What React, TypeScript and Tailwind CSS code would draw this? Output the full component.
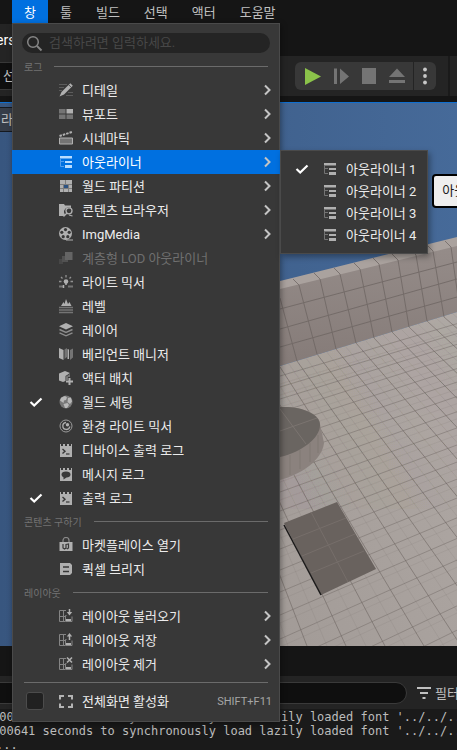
import React from "react";

const L = "#b0b0b0";
const D = "#747474";

type IconProps = { children: React.ReactNode };

function Svg({ children }: IconProps) {
  return (
    <svg viewBox="0 0 16 16" className="size-4 shrink-0" fill="none" aria-hidden="true">
      {children}
    </svg>
  );
}

const treeIcon = (main: string, dim: string) => (
  <Svg>
    <path d="M2 2h12v2.500H2zM7 7h7v2H7zM7 11h7v3H7z" fill={main} />
    <path d="M2.500 4.500v8H6M2.500 7.500H6" stroke={dim} />
  </Svg>
);

const consoleIcon = (
  <Svg>
    <path d="M2 2h1v2h2V2h2v2h2V2h2v2h2V2h1v13H2z" fill={L} />
    <path d="M4.500 7 7 9.200 4.500 11.500" stroke="#383838" strokeWidth="1.400" />
    <path d="M8 12h3.500" stroke="#383838" strokeWidth="1.200" />
  </Svg>
);

const layoutBase = (
  <>
    <path d="M8 2.500H1.500v11H7M1.500 8.500H8M5.500 2.500v11M8.500 7.500h-1v6h6.500v-5" stroke="#858585" />
    <path d="M8 11h5v2H8z" fill={L} />
  </>
);

const icons = {
  details: (
    <Svg>
      <path d="M1 2.500h8M1 5.500h5M1 8.500h3M10 10.500h5M8 13.500h7" stroke="#5c5c5c" />
      <path d="M12.300 1.200 14.800 3.700 6 12.500 1.500 14.500 3.500 10z" fill={L} />
      <path d="m10.700 2.800 2.500 2.500" stroke="#383838" strokeWidth=".8" />
    </Svg>
  ),
  viewport: (
    <Svg>
      <path d="M1 3h6.500v4.500H1zM1 8.500h6.500V13H1zM8.500 8.500H15V13H8.500z" fill={D} />
      <path d="M8.500 3H15v4.500H8.500z" fill={L} />
    </Svg>
  ),
  cinematic: (
    <Svg>
      <path d="M1.500 8h13v6h-13z" fill={D} stroke={L} />
      <path d="M1.500 6 14 2" stroke={L} strokeWidth="2" strokeDasharray="2.500 1" />
    </Svg>
  ),
  outlinerActive: treeIcon("#b8dcff", "#4f9df0"),
  outliner: treeIcon(L, D),
  partition: (
    <Svg>
      <path d="M2 2h12v12H2z" fill="#7d7d7d" />
      <path d="M2 2h5v4H2zM8 2h6v4H8zM2 7h3v3H2zM11 7h3v3h-3zM2 11h3v3H2zM6 11h4v3H6zM11 11h3v3h-3z" fill={L} />
      <path d="M6 7h4v3H6z" fill="#2c5282" />
    </Svg>
  ),
  content: (
    <Svg>
      <path d="M1 2h5l1 1.500h6V6a4.500 4.500 0 0 0-6 6.500L6 14H1z" fill={L} />
      <circle cx="11" cy="8.800" r="3" stroke={L} strokeWidth="1.300" />
      <path d="m9 11-3.500 3.500M11 13l3.500 1" stroke={L} strokeWidth="1.300" />
    </Svg>
  ),
  reel: (
    <Svg>
      <circle cx="7.500" cy="7.500" r="6.500" fill={L} />
      <g fill="#383838">
        <circle cx="7.500" cy="3.600" r="1.600" />
        <circle cx="11.200" cy="6.300" r="1.600" />
        <circle cx="9.800" cy="10.700" r="1.600" />
        <circle cx="5.200" cy="10.700" r="1.600" />
        <circle cx="3.800" cy="6.300" r="1.600" />
      </g>
      <path d="M8 14h7" stroke={L} />
    </Svg>
  ),
  lod: (
    <Svg>
      <path d="M1 9h4v5H1z" fill="#474747" />
      <path d="M4 6h6v6H4z" fill="#525252" />
      <path d="M7 2h7.500v8H7z" fill="#646464" />
    </Svg>
  ),
  light: (
    <Svg>
      <circle cx="8" cy="7.500" r="2.300" fill={L} />
      <path d="M8 1v2.500M3 3l1.500 1.500M13 3l-1.500 1.500M1 7.500h2.500M12.500 7.500H15" stroke="#929292" strokeWidth="1.300" />
      <path d="M1 12.500h5M10 12.500h5" stroke={D} strokeWidth="2" />
      <path d="M5.500 11v3M8 9v2" stroke={L} strokeWidth="1.500" />
    </Svg>
  ),
  level: (
    <Svg>
      <path d="M3 8 5.500 4 6.500 6 8 1l2 5 1.500-2L13.500 8z" fill={L} />
      <path d="M1 9.500h14M1 12h14M1 14.500h14" stroke={D} strokeWidth="1.300" />
    </Svg>
  ),
  layers: (
    <Svg>
      <path d="M8 1 15 4.200 8 7.500 1 4.200z" fill={L} />
      <path d="m1.500 7.500 6.500 3 6.500-3M1.500 10.800l6.500 3 6.500-3" stroke="#8c8c8c" strokeWidth="1.400" />
    </Svg>
  ),
  variant: (
    <Svg>
      <path d="M1 2l4.500 2v10L1 12z" fill={L} />
      <path d="M6.500 3.500 9 2v9l-2.500 2z" fill={D} />
      <path d="M9.500 3 11 3.500v9.500H9.500z" fill={L} />
      <path d="m12 4 3-1.500v9L12 14z" fill={D} />
    </Svg>
  ),
  place: (
    <Svg>
      <path d="M1 3.500 7 1l5 2L7.500 6v5L5 12 1 10.500z" fill={L} />
      <path d="M8 6.500 12 4v3h-2v3H8z" fill={D} />
      <path d="M11.500 8v7M8 11.500h7" stroke={L} strokeWidth="2" />
    </Svg>
  ),
  world: (
    <Svg>
      <circle cx="8" cy="8" r="6.500" fill="#777" />
      <path d="M3 3.800 7 2l2 1.500L8 6 6 6.500 5.500 9 2 6.500zM10 4l3-.5 1 4-2 2.500-2.500-2zM5.500 10l4-1 1.500 2-2 3H7z" fill="#b8b8b8" />
    </Svg>
  ),
  environment: (
    <Svg>
      <circle cx="8" cy="8" r="6" stroke="#9a9a9a" />
      <path d="M8 4.500a3.500 3.500 0 1 0 3.800 4" stroke={L} strokeWidth="1.300" />
      <circle cx="9.500" cy="6.700" r="1.700" fill={L} />
    </Svg>
  ),
  console: consoleIcon,
  message: (
    <Svg>
      <path d="M2 2h1v2h2V2h2v2h2V2h2v2h2V2h1v13H2z" fill={L} />
      <path d="M8 5.500c2.800 0 4.500 1.300 4.500 3s-1.700 3-4 3l-3 2v-2.300c-1.300-.6-2-1.500-2-2.700 0-1.700 1.700-3 4.500-3z" fill="#383838" />
    </Svg>
  ),
  market: (
    <Svg>
      <path d="M5 5V3.500a3 3 0 0 1 6 0V5" stroke="#8a8a8a" strokeWidth="1.200" />
      <path d="M1.500 5h13v9h-13z" fill={L} />
      <path d="M5 7v4l1.500 1 1.500-1M8 7v5M8 7.500 10.500 7v4l-1.500 1" stroke="#383838" strokeWidth="1.200" />
    </Svg>
  ),
  bridge: (
    <Svg>
      <path d="M2 2h10l2 2v8l-2 2H2z" fill={L} />
      <path d="M5 6h6M5 10.500h6" stroke="#383838" strokeWidth="1.500" />
    </Svg>
  ),
  layoutLoad: (
    <Svg>
      {layoutBase}
      <path d="M11.500 1v4" stroke={L} strokeWidth="1.500" />
      <path d="M8.800 4h5.400l-2.700 3.500z" fill={L} />
    </Svg>
  ),
  layoutSave: (
    <Svg>
      {layoutBase}
      <path d="M11.500 4v4" stroke={L} strokeWidth="1.500" />
      <path d="M8.800 4.500h5.400L11.500 1z" fill={L} />
    </Svg>
  ),
  layoutRemove: (
    <Svg>
      {layoutBase}
      <path d="m9 1.500 5 5M14 1.500l-5 5" stroke={L} strokeWidth="1.600" />
    </Svg>
  ),
  fullscreen: (
    <Svg>
      <path d="M6 3H2v3.500M10 3h4v3.500M6 14H2v-3.500M10 14h4v-3.500" stroke="#b4b4b4" strokeWidth="2" />
    </Svg>
  ),
};

type Row = {
  label: string;
  icon: keyof typeof icons;
  sub?: boolean;
  checked?: boolean;
  disabled?: boolean;
  open?: boolean;
};

const logRows: Row[] = [
  { label: "디테일", icon: "details", sub: true },
  { label: "뷰포트", icon: "viewport", sub: true },
  { label: "시네마틱", icon: "cinematic", sub: true },
  { label: "아웃라이너", icon: "outlinerActive", sub: true, open: true },
  { label: "월드 파티션", icon: "partition", sub: true },
  { label: "콘텐츠 브라우저", icon: "content", sub: true },
  { label: "ImgMedia", icon: "reel", sub: true },
  { label: "계층형 LOD 아웃라이너", icon: "lod", disabled: true },
  { label: "라이트 믹서", icon: "light" },
  { label: "레벨", icon: "level" },
  { label: "레이어", icon: "layers" },
  { label: "베리언트 매니저", icon: "variant" },
  { label: "액터 배치", icon: "place" },
  { label: "월드 세팅", icon: "world", checked: true },
  { label: "환경 라이트 믹서", icon: "environment" },
  { label: "디바이스 출력 로그", icon: "console" },
  { label: "메시지 로그", icon: "message" },
  { label: "출력 로그", icon: "console", checked: true },
];

const contentRows: Row[] = [
  { label: "마켓플레이스 열기", icon: "market" },
  { label: "퀵셀 브리지", icon: "bridge" },
];

const layoutRows: Row[] = [
  { label: "레이아웃 불러오기", icon: "layoutLoad", sub: true },
  { label: "레이아웃 저장", icon: "layoutSave", sub: true },
  { label: "레이아웃 제거", icon: "layoutRemove", sub: true },
];

function Check() {
  return (
    <svg viewBox="0 0 16 16" className="size-4" fill="none" aria-hidden="true">
      <path d="m2.500 8 3.700 3.500 7.300-7" stroke="#fff" strokeWidth="2.200" />
    </svg>
  );
}

function MenuRow({ row }: { row: Row }) {
  const tone = row.open ? "bg-[#0070e0] text-white" : row.disabled ? "text-[#6f6f6f]" : "text-[#ececec]";
  return (
    <li className="relative" role="none">
      <button
        type="button"
        role="menuitem"
        disabled={row.disabled}
        aria-haspopup={row.sub ? "menu" : undefined}
        className={`flex h-6 w-full items-center pr-2 pl-4 text-left ${tone}`}
      >
        <span className="mr-3.5 w-4 shrink-0">{row.checked && <Check />}</span>
        {icons[row.icon]}
        <span className="ml-2 flex-1 pt-0.5 whitespace-nowrap">{row.label}</span>
        {row.sub && (
          <svg viewBox="0 0 9 12" className="h-3 w-[9px]" fill="none" aria-hidden="true">
            <path d="m2 1.500 4.500 4.500L2 10.500" stroke="#c4c4c4" strokeWidth="2" />
          </svg>
        )}
      </button>
      {row.open && <SubMenu />}
    </li>
  );
}

function SubMenu() {
  return (
    <div className="absolute top-0 left-full z-10 bg-[#383838] py-2 shadow-[inset_0_0_0_1px_#4a4a4a,2px_3px_6px_rgba(0,0,0,0.35)]">
      <ul role="menu" aria-label="아웃라이너">
        {[1, 2, 3, 4].map((n) => (
          <li key={n} role="none">
            <button
              type="button"
              role="menuitemradio"
              aria-checked={n === 1}
              className="flex h-[22px] items-center pr-3 pl-3.5 whitespace-nowrap text-[#ececec]"
            >
              <span className="mr-3 w-4 shrink-0">{n === 1 && <Check />}</span>
              {icons.outliner}
              <span className="ml-2 pt-0.5">아웃라이너 {n}</span>
            </button>
          </li>
        ))}
      </ul>
      <div
        role="tooltip"
        className="absolute top-6 left-full ml-1 rounded-sm border-2 border-black bg-[#efefef] px-2 py-[5px] leading-5 whitespace-nowrap text-[#1a1a1a]"
      >
        아웃
      </div>
    </div>
  );
}

function Section({ title, rows }: { title: string; rows: Row[] }) {
  return (
    <section>
      <h2 className="flex h-[23px] items-center gap-3 pr-3 pl-3 text-[10px] text-[#737373]">
        <span className="pt-0.5">{title}</span>
        <span className="h-px flex-1 bg-[#6b6b6b]" />
      </h2>
      <ul role="menu" aria-label={title}>
        {rows.map((r) => (
          <MenuRow key={r.label} row={r} />
        ))}
      </ul>
    </section>
  );
}

function WindowMenu() {
  return (
    <div className="absolute top-full left-0 z-20 w-[268px] bg-[#383838] pt-2.5 pb-[9px] text-[#ececec] shadow-[inset_0_0_0_1px_#4a4a4a,1px_2px_6px_rgba(0,0,0,0.4)]">
      <label className="mx-2.5 mb-0.5 flex h-5 items-center gap-1.5 rounded-full bg-[#242424] pl-1">
        <svg viewBox="0 0 17 17" className="size-[17px] shrink-0" fill="none" aria-hidden="true">
          <circle cx="7" cy="7" r="5.300" stroke="#858585" strokeWidth="1.500" />
          <path d="m11 11 4.500 4.500" stroke="#858585" strokeWidth="2" />
        </svg>
        <input
          type="text"
          aria-label="검색"
          placeholder="검색하려면 입력하세요."
          className="w-full min-w-0 bg-transparent leading-5 outline-none placeholder:text-[#474747]"
        />
      </label>
      <Section title="로그" rows={logRows} />
      <Section title="콘텐츠 구하기" rows={contentRows} />
      <Section title="레이아웃" rows={layoutRows} />
      <div className="mx-3 my-1.5 h-px bg-[#6b6b6b]" />
      <label className="flex h-6 items-center pr-2 pl-3.5">
        <input
          type="checkbox"
          className="mr-3.5 size-[18px] shrink-0 appearance-none rounded-[3px] border border-[#4c4c4c] bg-[#212121]"
        />
        {icons.fullscreen}
        <span className="ml-2 flex-1 pt-0.5 whitespace-nowrap">전체화면 활성화</span>
        <span className="pt-0.5 text-[11px] text-[#a6a6a6]">SHIFT+F11</span>
      </label>
    </div>
  );
}

function MenuBar() {
  return (
    <nav className="relative ml-3 flex h-[23px]">
      {["창", "툴", "빌드", "선택", "액터", "도움말"].map((name, i) => (
        <button
          key={name}
          type="button"
          className={`shrink-0 px-3 pt-0.5 ${i === 0 ? "bg-[#0070e0] text-white" : "text-[#c0c0c0]"}`}
        >
          {name}
        </button>
      ))}
      <WindowMenu />
    </nav>
  );
}

function PlayControls() {
  return (
    <div className="flex h-7 items-center overflow-hidden rounded-md bg-[#383838]">
      <div className="flex h-full items-center gap-2.5 border-r border-[#242424] pr-[7px] pl-2">
        <button type="button" aria-label="재생" className="size-[19px]">
          <svg viewBox="0 0 19 19"><path d="M2 1v17l16-8.500z" fill="#8bc34a" /></svg>
        </button>
        <button type="button" aria-label="프레임 건너뛰기" className="size-[18px]">
          <svg viewBox="0 0 18 18"><path d="M2 1.500h3v15.500H2zM8 1.500 17 9.500 8 17z" fill="#747474" /></svg>
        </button>
        <button type="button" aria-label="중지" className="size-[18px]">
          <svg viewBox="0 0 18 18"><path d="M2 1h14v16H2z" fill="#747474" /></svg>
        </button>
        <button type="button" aria-label="탈출" className="size-[18px]">
          <svg viewBox="0 0 18 18"><path d="M9 1.500 17 10H1zM1 13h16v3H1z" fill="#747474" /></svg>
        </button>
      </div>
      <button type="button" aria-label="옵션" className="h-full w-[22px]">
        <svg viewBox="0 0 22 28" fill="#c8c8c8">
          <circle cx="11" cy="7.500" r="1.900" />
          <circle cx="11" cy="14" r="1.900" />
          <circle cx="11" cy="20.500" r="1.900" />
        </svg>
      </button>
    </div>
  );
}

const floorRays = [
  [191, 396, 268], [209, 391, 307], [226, 386, 346], [244, 381, 385], [262, 375, 424], [280, 367, 461],
  [297, 361, 500], [317, 354, 540], [336, 349, 580], [356, 343, 620], [374, 338, 660], [392, 332, 700],
  [409, 327, 740], [427, 321, 780], [444, 317, 820],
];
const floorRows = [376, 387, 399, 412, 426, 441, 457, 474, 492, 511, 530, 549, 570, 592, 615, 639, 664, 690, 717];
const wallSeams = [
  [280, 298, 297, 361], [299, 285, 317, 354], [320, 279, 336, 349], [340, 274, 356, 343], [360, 269, 374, 338],
  [379, 264, 392, 332], [398, 260, 409, 327], [416, 255, 427, 321], [433, 251, 444, 317], [451, 247, 460, 311],
];

function Scene() {
  const slope = (y: number) => 0.29 + ((y - 366) / 280) * 0.16;
  return (
    <svg viewBox="0 103 457 543" preserveAspectRatio="xMidYMid slice" className="absolute inset-0 size-full" aria-hidden="true">
      <defs>
        <linearGradient id="sky" x1="0" x2="1" y1="0" y2="0">
          <stop offset="0" stopColor="#38567f" />
          <stop offset="1" stopColor="#466a99" />
        </linearGradient>
        <linearGradient id="wall" x1="0" x2="0" y1="0" y2="1">
          <stop offset="0" stopColor="#958c89" />
          <stop offset="1" stopColor="#857b78" />
        </linearGradient>
        <linearGradient id="floor" x1="0" x2="1" y1="1" y2="0">
          <stop offset="0" stopColor="#a29b97" />
          <stop offset="1" stopColor="#b0a9a5" />
        </linearGradient>
        <clipPath id="floorClip"><path d="M280 366 457 312V646H280z" /></clipPath>
      </defs>
      <rect x="0" y="103" width="457" height="543" fill="url(#sky)" />
      <path d="M280 281 457 237V247L280 290z" fill="#aaa29e" />
      <path d="M280 289 457 246V312L280 366z" fill="url(#wall)" />
      <path d="M280 366 457 312V646H280z" fill="url(#floor)" />
      <g stroke="#6c6461" strokeWidth="1" opacity=".75">
        {wallSeams.map(([a, b, c, d]) => (
          <path key={a} d={`M${a - 6} ${b - 6} ${a} ${b} ${c} ${d}`} fill="none" />
        ))}
        <path d="M280 309 457 262M280 329 457 279M280 347 457 297" />
      </g>
      <g clipPath="url(#floorClip)" stroke="#6f6763">
        {floorRays.map(([x, y, b]) => (
          <g key={x}>
            <path d={`M${x} ${y}L${b} 646`} opacity=".6" />
            <path d={`M${x + 9} ${y - 3}L${b + 20} 646`} opacity=".12" />
          </g>
        ))}
        {floorRows.map((y) => (
          <g key={y}>
            <path d={`M280 ${y}L457 ${y - 177 * slope(y)}`} opacity=".45" />
            <path d={`M280 ${y + 8}L457 ${y + 8 - 177 * slope(y + 8)}`} opacity=".12" />
          </g>
        ))}
      </g>
      <path d="M280 407C302 406 320 414 320 424L324 443C322 460 302 474 280 480z" fill="#8b827e" />
      <path d="M280 407C302 406 320 414 320 425 320 438 302 452 280 457z" fill="#6a6561" />
      <path d="M280 409 306 444M280 431 317 418" stroke="#7b7470" strokeWidth="1" />
      <path d="M290 455v20M300 450v19M310 443v19M318 435v18" stroke="#756d69" strokeWidth=".5" />
      <path d="M284 523 337 502 376 569 321 595z" fill="#69625e" />
      <path d="M284 525 321 595" stroke="#1b1a1a" strokeWidth="1.500" />
      <path d="M311 512 348 582M293 539 346 518M302 556 355 534M311 573 364 551" stroke="#766e6a" />
    </svg>
  );
}

export default function App() {
  return (
    <div className="relative flex min-h-screen flex-col overflow-hidden bg-[#151515] font-['Roboto','Noto_Sans_CJK_KR',sans-serif] text-[13px] leading-5 text-[#c0c0c0]">
      <MenuBar />
      <div className="flex h-[33px] items-end">
        <div className="flex h-8 w-3 items-center overflow-hidden bg-[#242424] text-sm text-white">
          <span className="-ml-1">ers</span>
        </div>
      </div>
      <div className="flex h-10 items-center justify-between bg-[#242424]">
        <button type="button" className="h-7 w-3 overflow-hidden border-y border-[#383838] bg-[#0f0f0f] pl-[3px] text-left">
          선
        </button>
        <div className="flex h-full items-center gap-3">
          <PlayControls />
          <span className="mr-[7px] h-full w-0.5 bg-[#1a1a1a]" />
        </div>
      </div>
      <main className="relative mt-1.5 flex-1 overflow-hidden border-t border-[#0f6fd0]">
        <Scene />
        <button type="button" className="absolute top-1 left-0 h-[25px] w-3 overflow-hidden border-y border-[#15191f] bg-[#363d49] pl-px text-left">
          라
        </button>
      </main>
      <div className="mt-[30px] flex h-[33px] items-center gap-2.5 bg-[#242424]">
        <input
          type="text"
          aria-label="로그 검색"
          className="-ml-5 h-[22px] min-w-0 flex-1 rounded-full border border-[#3a3a3a] bg-[#0f0f0f] px-8"
        />
        <button type="button" className="-mr-0.5 flex shrink-0 items-center gap-1">
          <svg viewBox="0 0 14 14" className="size-3.5" aria-hidden="true">
            <path d="M0 1h14v2H0zM3 6h8v2H3zM5.500 11h3v2h-3z" fill="#c0c0c0" />
          </svg>
          <span className="pt-0.5">필터</span>
        </button>
      </div>
      <div className="-mb-px h-[42px] overflow-hidden bg-[#1a1a1a] pt-px font-['DejaVu_Sans_Mono',monospace] text-xs leading-[14px] whitespace-pre text-[#bcbcbc]">
        <p className="-ml-2">000641 seconds to synchronously load lazily loaded font '../../../</p>
        <p className="-ml-2">000641 seconds to synchronously load lazily loaded font '../../../</p>
        <p className="-ml-1">...</p>
      </div>
    </div>
  );
}
